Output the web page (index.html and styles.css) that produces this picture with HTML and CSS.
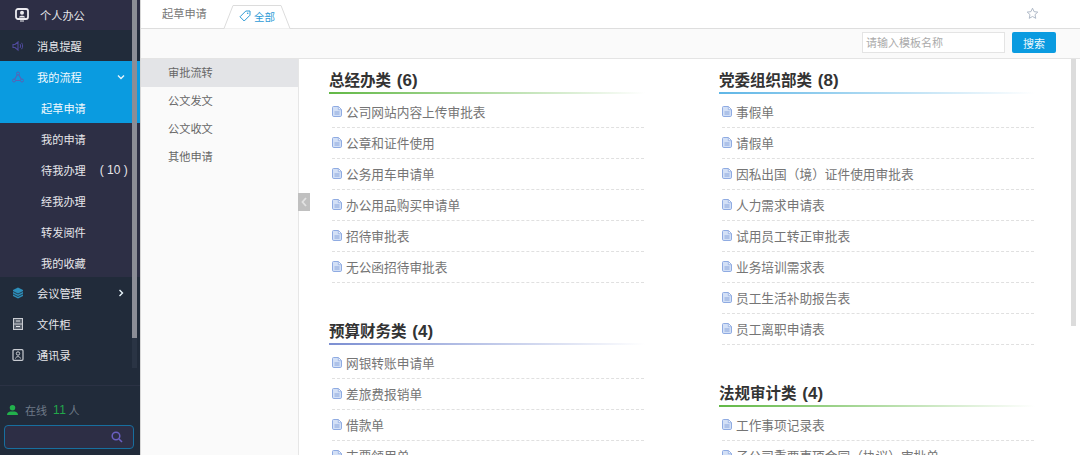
FILE: index.html
```html
<!DOCTYPE html>
<html lang="zh">
<head>
<meta charset="utf-8">
<title>起草申请</title>
<link rel="stylesheet" href="styles.css">
</head>
<body>
<svg class="defs" aria-hidden="true"><symbol id="doc" viewBox="0 0 10 11"><path d="M1.500.5H6.500L9.500 3.500V9.200a1.300 1.300 0 0 1-1.300 1.300H1.800A1.300 1.300 0 0 1 .5 9.200V1.500a1 1 0 0 1 1-1z" fill="#d3e0f6" stroke="#8fabe2"/><path d="M6.300.8V3.700H9.200" fill="#f4f7fc" stroke="#8fabe2" stroke-width=".8"/><path d="M2.500 6h5M2.500 8h5" stroke="#7f9dd8" stroke-width=".9"/></symbol></svg>
<div class="app">
  <aside class="sidebar">
    <nav class="menu">
      <div class="row top dark"><svg class="ic wide" viewBox="0 0 14 14"><rect x="1" y="1" width="12" height="10" rx="2" fill="#2d2e45" stroke="#ecebf0" stroke-width="1.800"/><circle cx="7" cy="4.800" r="2" fill="#ecebf0"/><path d="M3.800 9.500c.5-2.500 5.900-2.500 6.400 0zM5 12.500h4v1H5z" fill="#ecebf0"/></svg><span class="lbl">个人办公</span></div>
      <div class="row top slate"><svg class="ic" viewBox="0 0 12 12"><path d="M1 4.500h2L6 2v8L3 7.500H1z" fill="none" stroke="#4f4a9c" stroke-width="1.100"/><path d="M8 4c.8 1 .8 3 0 4M9.500 2.800c1.500 1.800 1.500 4.600 0 6.400" fill="none" stroke="#4f4a9c"/></svg><span class="lbl">消息提醒</span></div>
      <div class="row top blue"><svg class="ic" viewBox="0 0 12 12"><path d="M6 2.500l4 7H2z" fill="none" stroke="#5a62b4" stroke-width="1.100"/><circle cx="6" cy="2.500" r="1.500" fill="#0a9be0" stroke="#5a62b4"/><circle cx="2" cy="9.500" r="1.500" fill="#0a9be0" stroke="#5a62b4"/><circle cx="10" cy="9.500" r="1.500" fill="#0a9be0" stroke="#5a62b4"/></svg><span class="lbl">我的流程</span><svg class="chev" viewBox="0 0 8 8"><path d="M1 2.500l3 3 3-3" fill="none" stroke="#e8f4fb" stroke-width="1.400"/></svg></div>
      <div class="row sub blue">起草申请</div>
      <div class="subs">
        <div class="row sub">我的申请</div>
        <div class="row sub">待我办理<span class="count">( 10 )</span></div>
        <div class="row sub">经我办理</div>
        <div class="row sub">转发阅件</div>
        <div class="row sub">我的收藏</div>
      </div>
      <div class="row top slate"><svg class="ic" viewBox="0 0 12 12"><path d="M6 .5l5 2.500v6L6 11.500 1 9V3z" fill="#2d8fbb"/><path d="M1 4.500L6 7l5-2.500M1 7l5 2.500L11 7" fill="none" stroke="#1f2b3a" stroke-width=".8"/></svg><span class="lbl">会议管理</span><svg class="chev" viewBox="0 0 8 8"><path d="M2.500 1l3 3-3 3" fill="none" stroke="#e8f4fb" stroke-width="1.400"/></svg></div>
      <div class="row top slate"><svg class="ic" viewBox="0 0 12 12"><rect x="1.500" y=".5" width="9" height="11" fill="#59616d" stroke="#c9ccd2"/><path d="M1.500 6h9" stroke="#c9ccd2"/><path d="M4 3h4M4 8.500h4" stroke="#dfe1e5"/></svg><span class="lbl">文件柜</span></div>
      <div class="row top slate"><svg class="ic" viewBox="0 0 12 12"><rect x="1" y=".7" width="10" height="10.600" rx="1" fill="none" stroke="#c9ccd2" stroke-width="1.200"/><circle cx="6" cy="4.500" r="1.700" fill="none" stroke="#c9ccd2"/><path d="M3.500 9.500c.5-2.500 4.500-2.500 5 0" fill="none" stroke="#c9ccd2"/></svg><span class="lbl">通讯录</span></div>
    </nav>
    <div class="side-foot">
      <div class="online"><svg class="user" viewBox="0 0 12 12"><circle cx="6" cy="3.500" r="3" fill="#22b14c"/><path d="M0 11.500c0-4 4-4 4-4h4s4 0 4 4z" fill="#22b14c"/></svg>在线<b>11</b>人</div>
      <div class="side-search"><svg class="glass" viewBox="0 0 12 12"><circle cx="5" cy="5" r="3.800" fill="none" stroke="#6a5fc0" stroke-width="1.500"/><path d="M8 8l3 3" stroke="#6a5fc0" stroke-width="1.600"/></svg></div>
    </div>
    <div class="scroll-track"><div class="scroll-thumb"></div></div>
  </aside>
  <main class="main">
    <header class="tabs">
      <span class="tab-plain">起草申请</span>
      <div class="tab-active">
        <svg class="tab-shape" viewBox="0 0 70 24"><path d="M0 23.500h1L10 .5h48l9 23h3" fill="#fff" stroke="#dcdcdc"/></svg>
        <svg class="tag" viewBox="0 0 12 12"><path d="M1 6.800L6.800 1H11v4.200L5.200 11z" fill="none" stroke="#2e9bd6"/><circle cx="8.700" cy="3.300" r=".8" fill="#2e9bd6"/></svg>
        <span class="tab-text">全部</span>
      </div>
      <svg class="star" viewBox="0 0 14 14"><path d="M7 1.300l1.700 3.700 4 .5-3 2.700.8 4L7 10.200 3.500 12.200l.8-4-3-2.700 4-.5z" fill="none" stroke="#aab4c4"/></svg>
    </header>
    <div class="toolbar">
      <div class="search-input">请输入模板名称</div>
      <button class="search-btn">搜索</button>
    </div>
    <div class="body">
      <nav class="catnav">
        <div class="cat on">审批流转</div>
        <div class="cat">公文发文</div>
        <div class="cat">公文收文</div>
        <div class="cat">其他申请</div>
        <div class="collapse"><svg viewBox="0 0 12 18"><path d="M8 5L4.500 9 8 13" fill="none" stroke="#e2e2e2" stroke-width="1.800"/></svg></div>
      </nav>
      <div class="content">
        <div class="col">
          <section class="sec">
            <h2 class="sec-title">总经办类 <span class="num">(6)</span></h2>
            <div class="rule green"></div>
            <ul class="list">
              <li class="item"><svg class="doc"><use href="#doc"/></svg><span>公司网站内容上传审批表</span></li>
              <li class="item"><svg class="doc"><use href="#doc"/></svg><span>公章和证件使用</span></li>
              <li class="item"><svg class="doc"><use href="#doc"/></svg><span>公务用车申请单</span></li>
              <li class="item"><svg class="doc"><use href="#doc"/></svg><span>办公用品购买申请单</span></li>
              <li class="item"><svg class="doc"><use href="#doc"/></svg><span>招待审批表</span></li>
              <li class="item"><svg class="doc"><use href="#doc"/></svg><span>无公函招待审批表</span></li>
            </ul>
          </section>
          <section class="sec">
            <h2 class="sec-title">预算财务类 <span class="num">(4)</span></h2>
            <div class="rule violet"></div>
            <ul class="list">
              <li class="item"><svg class="doc"><use href="#doc"/></svg><span>网银转账申请单</span></li>
              <li class="item"><svg class="doc"><use href="#doc"/></svg><span>差旅费报销单</span></li>
              <li class="item"><svg class="doc"><use href="#doc"/></svg><span>借款单</span></li>
              <li class="item"><svg class="doc"><use href="#doc"/></svg><span>支票领用单</span></li>
            </ul>
          </section>
        </div>
        <div class="col">
          <section class="sec">
            <h2 class="sec-title">党委组织部类 <span class="num">(8)</span></h2>
            <div class="rule sky"></div>
            <ul class="list">
              <li class="item"><svg class="doc"><use href="#doc"/></svg><span>事假单</span></li>
              <li class="item"><svg class="doc"><use href="#doc"/></svg><span>请假单</span></li>
              <li class="item"><svg class="doc"><use href="#doc"/></svg><span>因私出国<span class="tc">（</span>境<span class="tc">）</span>证件使用审批表</span></li>
              <li class="item"><svg class="doc"><use href="#doc"/></svg><span>人力需求申请表</span></li>
              <li class="item"><svg class="doc"><use href="#doc"/></svg><span>试用员工转正审批表</span></li>
              <li class="item"><svg class="doc"><use href="#doc"/></svg><span>业务培训需求表</span></li>
              <li class="item"><svg class="doc"><use href="#doc"/></svg><span>员工生活补助报告表</span></li>
              <li class="item"><svg class="doc"><use href="#doc"/></svg><span>员工离职申请表</span></li>
            </ul>
          </section>
          <section class="sec">
            <h2 class="sec-title">法规审计类 <span class="num">(4)</span></h2>
            <div class="rule green"></div>
            <ul class="list">
              <li class="item"><svg class="doc"><use href="#doc"/></svg><span>工作事项记录表</span></li>
              <li class="item"><svg class="doc"><use href="#doc"/></svg><span>子公司重要事项会同<span class="tc">（</span>协议<span class="tc">）</span>审批单</span></li>
            </ul>
          </section>
        </div>
        <div class="page-scroll"></div>
      </div>
    </div>
  </main>
</div>
</body>
</html>
```

FILE: styles.css
```css
* { box-sizing: border-box; }
html, body { margin: 0; height: 455px; overflow: hidden; }
body { font-family: "Noto Sans CJK SC", "Liberation Sans", sans-serif; color: #666; background: #fff; }
.defs { display: none; }
.app { display: flex; width: 1080px; height: 455px; }

.sidebar { position: relative; width: 140px; flex: none; display: flex; flex-direction: column; background: #212b3a; }
.menu { height: 385px; flex: none; }
.row { display: flex; align-items: center; height: 31px; font-size: 11.2px; color: #e6e6ea; }
.top { padding-left: 12px; }
.top:first-child { height: 30px; padding-left: 15px; background: #2d2e45; }
.slate { background: #212b3a; }
.blue { background: #0a9be0; color: #f2f9fd; }
.ic { width: 12px; height: 12px; flex: none; margin-right: 13px; }
.ic.wide { width: 14px; height: 14px; margin-right: 11px; }
.lbl { flex: 1; }
.chev { width: 8px; height: 8px; margin-right: 15px; flex: none; }
.sub { padding-left: 41px; }
.subs { background: #2d2f45; height: 154px; }
.count { margin-left: 14px; white-space: nowrap; font-family: "Liberation Sans", sans-serif; font-size: 12px; }
.side-foot { border-top: 1px solid #2b3244; padding: 16px 6px 0 4px; flex: 1; }
.online { display: flex; align-items: center; height: 16px; font-size: 11px; color: #6f7a88; padding-left: 3px; }
.user { width: 11px; height: 12px; margin-right: 7px; }
.online b { font: 400 12px "Liberation Sans", sans-serif; color: #22a84a; margin: 0 2px 0 6px; letter-spacing: .5px; }
.side-search { margin-top: 7px; height: 24px; border: 1px solid #176f9f; border-radius: 4px; background: #2d2e45; display: flex; justify-content: flex-end; align-items: center; padding-right: 10px; }
.glass { width: 12px; height: 12px; }
.scroll-track { position: absolute; left: 132px; top: 0; width: 5px; height: 368px; background: #2a3444; }
.scroll-thumb { width: 5px; height: 338px; background: #8b8d96; }

.main { flex: 1; min-width: 0; display: flex; flex-direction: column; border-left: 1px solid #d8d8d8; }
.tabs { height: 29px; flex: none; display: flex; align-items: flex-end; background: #fff; border-bottom: 1px solid #dedede; position: relative; }
.tab-plain { width: 82px; height: 28px; line-height: 27px; padding-left: 21px; font-size: 11.200px; color: #777; flex: none; }
.tab-active { position: relative; width: 70px; height: 24px; margin-bottom: -1px; display: flex; align-items: center; padding: 0 0 2px 16px; flex: none; }
.tab-shape { position: absolute; left: 0; top: 0; width: 70px; height: 24px; }
.tag { position: relative; width: 12px; height: 12px; margin-right: 3px; }
.tab-text { position: relative; font-size: 10.500px; color: #2e9bd6; }
.star { width: 13px; height: 13px; margin: 0 41px 8px auto; }

.toolbar { height: 30px; flex: none; display: flex; justify-content: flex-end; align-items: center; background: #fafafa; border-bottom: 1px solid #e4e4e4; padding: 0 24px 2px 0; }
.search-input { width: 143px; height: 21px; line-height: 19px; border: 1px solid #e4e4e4; background: #fff; padding-left: 3px; font-size: 11px; color: #aaa; }
.search-btn { width: 44px; height: 21px; margin-left: 7px; border: 0; border-radius: 2px; background: #0a9be0; color: #eef8fd; font: 11px "Noto Sans CJK SC", sans-serif; padding: 0; }

.body { flex: 1; min-height: 0; display: flex; }
.catnav { position: relative; width: 158px; flex: none; background: #fafafa; border-right: 1px solid #e6e6e6; }
.cat { height: 28px; line-height: 26px; padding-left: 27px; font-size: 11.200px; color: #666; }
.cat.on { background: #e3e4e7; }
.collapse { position: absolute; right: -12px; top: 134px; width: 12px; height: 18px; background: #c0c0c0; }
.collapse svg { display: block; width: 12px; height: 18px; }

.content { position: relative; flex: 1; min-width: 0; display: grid; grid-template-columns: 390px 1fr; padding: 8px 0 0 30px; overflow: hidden; align-items: start; }
.sec { width: 316px; margin-bottom: 35px; }
.sec-title { margin: 0; height: 25px; line-height: 27px; font-family: "Liberation Sans", "Noto Sans CJK SC", sans-serif; font-size: 15.500px; font-weight: 700; color: #333; white-space: nowrap; word-spacing: 1.500px; }
.num { font-size: 17px; }
.rule { height: 2px; width: 316px; }
.green { background: linear-gradient(90deg, #62b846, #fff); }
.sky { background: linear-gradient(90deg, #5fb6e6, #fff); }
.violet { background: linear-gradient(90deg, #7c8fd2, #fff); }
.list { margin: 3px 0 0 3px; padding: 0; list-style: none; width: 312px; }
.item { display: flex; align-items: center; height: 31px; padding-bottom: 2px; border-bottom: 1px dashed #e0e0e0; font-size: 12.700px; color: #757575; white-space: nowrap; }
.doc { width: 10px; height: 11px; margin-right: 4px; flex: none; }
.tc { font-family: "Noto Sans CJK TC", sans-serif; }
.page-scroll { position: absolute; right: 4px; top: 0; width: 5px; height: 267px; background: #dcdcdc; }
```
